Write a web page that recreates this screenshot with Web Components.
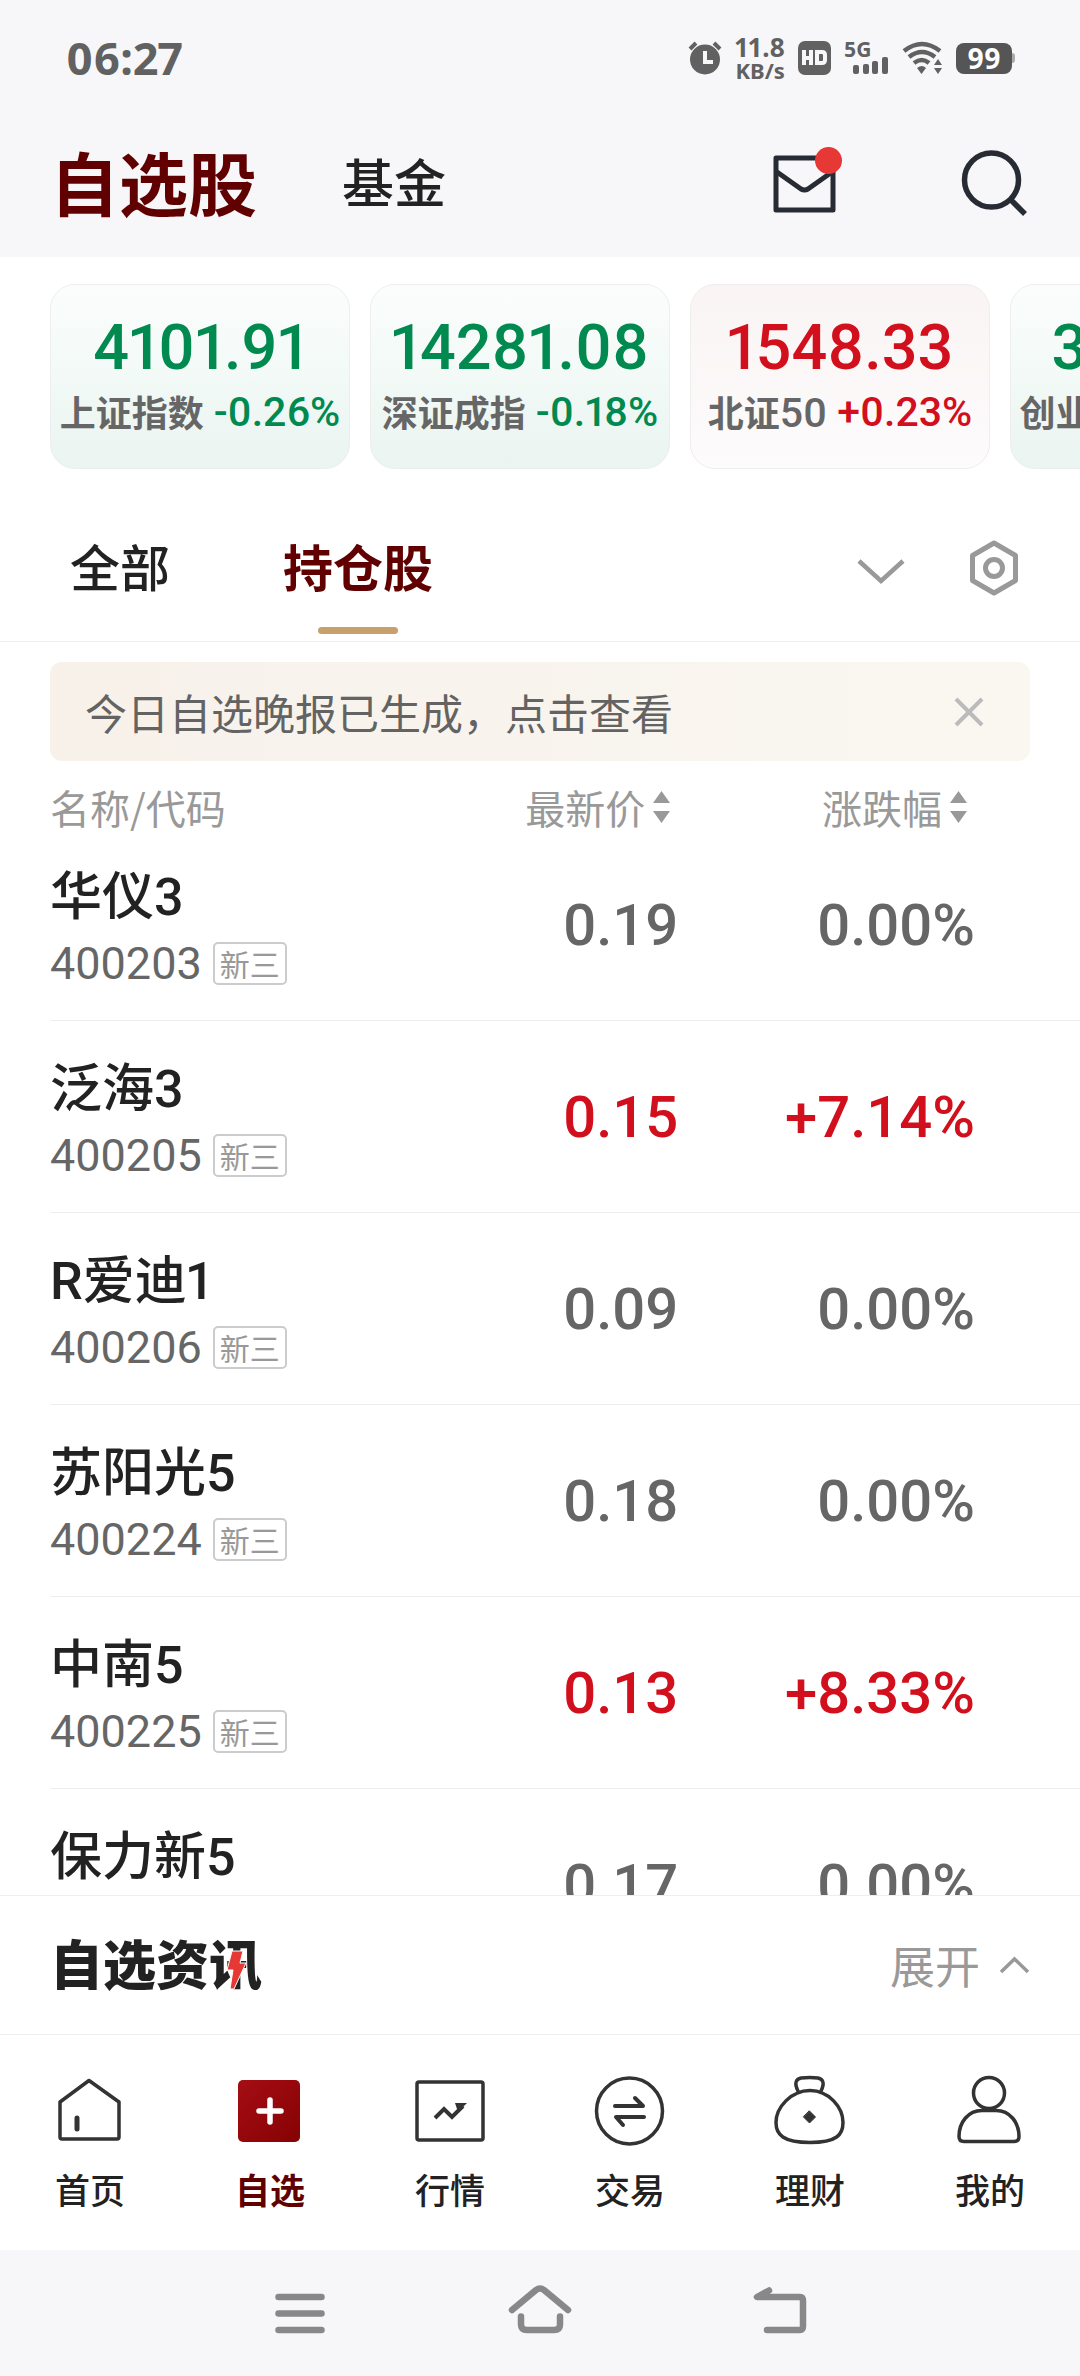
<!DOCTYPE html>
<html lang="zh-CN">
<head>
<meta charset="utf-8">
<meta name="viewport" content="width=device-width, initial-scale=1">
<title>自选股</title>
<style>
  :root {
    --num: Roboto, "Noto Sans CJK SC", sans-serif;
    --bold-num: "Noto Sans", "Noto Sans CJK SC", sans-serif;
    --cjk: "Noto Sans CJK SC", "Noto Sans", sans-serif;
    --brand: #600000;
    --ink: #222;
    --mid: #666;
    --soft: #999;
    --up: #d20f1c;
    --down: #008a50;
    --line: #eee;
    --bar: #f7f7f9;
  }
  html, body { margin: 0; height: 100%; }
  body { background: #fff; color: var(--ink); font: 400 40px/1 var(--cjk); font-variant-numeric: proportional-nums; }
</style>
</head>
<body>
<watch-app></watch-app>

<script>
const base = `
  *, *::before, *::after { box-sizing: border-box; }
  svg { display: block; flex: none; }
  button { appearance: none; border: 0; margin: 0; padding: 0; background: none; font: inherit; color: inherit; display: block; }
  a { color: inherit; text-decoration: none; }
`;

function define(name, css, html) {
  const template = document.createElement('template');
  template.innerHTML = `<style>${base}${css}</style>${html}`;
  customElements.define(name, class extends HTMLElement {
    constructor() {
      super();
      this.attachShadow({ mode: 'open' }).append(template.content.cloneNode(true));
    }
  });
}

define('status-bar', `
  :host { display: flex; align-items: center; justify-content: space-between; height: 116px; padding: 0 65px 0 66px; color: #616161; font-family: var(--bold-num); font-weight: 700; }
  time { font-size: 45px; line-height: 60px; }
  .icons { display: flex; align-items: center; gap: 13px; }
  .speed { display: flex; flex-direction: column; align-items: center; font-size: 26px; line-height: 24px; }
  .speed small { font-size: 22px; line-height: 22px; }
  .cell { display: flex; flex-direction: column; width: 45px; font-size: 21px; line-height: 15px; }
  .cell svg { align-self: flex-end; }
  .battery { display: flex; align-items: center; }
  .battery span { width: 56px; height: 31px; border-radius: 8px; background: #555; color: #fff; font-size: 28px; line-height: 31px; text-align: center; }
  .battery::after { content: ""; width: 3px; height: 10px; background: #aaa; border-radius: 0 3px 3px 0; }
`, `
  <time>06:27</time>
  <div class="icons">
    <svg width="34" height="34" viewBox="0 0 34 34"><circle cx="17" cy="18.500" r="15" fill="#616161"/><path d="M2 8l6-6M32 8l-6-6" stroke="#616161" stroke-width="4"/><path d="M17 10v11h8" fill="none" stroke="#f7f7f9" stroke-width="4"/></svg>
    <div class="speed"><span>11.8</span><small>KB/s</small></div>
    <svg width="33" height="34" viewBox="0 0 33 34"><rect width="33" height="34" rx="7" fill="#616161"/><path d="M6 9v15M13 9v15M6 17h7M19 11h5q3 0 3 3v5q0 3-3 3h-5z" fill="none" stroke="#f7f7f9" stroke-width="4"/></svg>
    <div class="cell"><span>5G</span><svg width="36" height="18" viewBox="0 0 36 18"><g fill="#616161"><rect x="0" y="8" width="6" height="9" rx="2"/><rect x="10" y="7" width="6" height="10" rx="2"/><rect x="19" y="4" width="6" height="13" rx="2"/><rect x="29" y="0" width="6" height="17" rx="2"/></g></svg></div>
    <svg width="41" height="34" viewBox="0 0 41 34"><g fill="none" stroke="#616161" stroke-width="4.500"><path d="M2 10q18-14 36 0"/><path d="M7 16q13-10 26 0"/><path d="M12 22q8-6 15 0"/></g><path d="M15 27q5-4 9 0l-4.500 6zM32 24l4-6 4 6zM32 27l4 6 4-6z" fill="#616161"/></svg>
    <div class="battery"><span>99</span></div>
  </div>
`);

define('app-header', `
  :host { display: flex; align-items: center; justify-content: space-between; height: 141px; padding: 0 50px 12px; }
  nav { display: flex; align-items: center; gap: 85px; }
  a { font-size: 52px; font-weight: 500; line-height: 76px; }
  a[aria-current] { font-size: 69px; font-weight: 700; color: var(--brand); }
  .tools { display: flex; align-items: center; gap: 117px; }
`, `
  <nav><a href="#stocks" aria-current="page">自选股</a><a href="#funds">基金</a></nav>
  <div class="tools">
    <button aria-label="消息"><svg width="70" height="70" viewBox="0 0 70 70"><g fill="none" stroke="#272b34" stroke-width="5" stroke-linejoin="round"><rect x="3" y="12" width="57" height="52"/><path d="M4 26l24 17q3.500 2 7 0l24-17"/></g><circle cx="55.500" cy="14.500" r="13.500" fill="#e63935"/></svg></button>
    <button aria-label="搜索"><svg width="70" height="70" viewBox="0 0 70 70"><g fill="none" stroke="#272b34" stroke-width="5.500"><circle cx="31.500" cy="34" r="27"/><path d="M50 53l15 15"/></g></svg></button>
  </div>
`);

define('index-card', `
  :host { flex: 0 0 300px; display: flex; flex-direction: column; align-items: center; height: 185px; padding-top: 30px; border: 1px solid var(--line); border-radius: 25px; color: var(--down); background: linear-gradient(#fbfdfc, #f3faf7 45%, #eaf4f0); box-sizing: border-box; white-space: nowrap; font-family: var(--num); font-weight: 500; }
  :host([up]) { color: var(--up); background: linear-gradient(#faf4f4, #fdfbfc); }
  .value { font-size: 63px; line-height: 66px; }
  .row { display: flex; align-items: center; gap: 10px; font-size: 41px; line-height: 60px; }
  .name { color: var(--mid); }
  ::slotted([slot=name]) { font: 700 36px/60px var(--cjk); }
`, `
  <div class="value"><slot></slot></div>
  <div class="row"><div class="name"><slot name="name"></slot><slot name="num"></slot></div><slot name="change"></slot></div>
`);

define('index-strip', `
  :host { display: flex; gap: 20px; padding: 27px 0 0 50px; overflow: hidden; background: #fff; }
`, `
  <index-card>4101.91<span slot="name">上证指数</span><span slot="change">-0.26%</span></index-card>
  <index-card>14281.08<span slot="name">深证成指</span><span slot="change">-0.18%</span></index-card>
  <index-card up>1548.33<span slot="name">北证</span><span slot="num">50</span><span slot="change">+0.23%</span></index-card>
  <index-card>3317.81<span slot="name">创业板指</span><span slot="change">-0.20%</span></index-card>
`);

define('watch-tabs', `
  :host { display: flex; align-items: stretch; justify-content: space-between; height: 173px; padding: 0 56px 0 70px; border-bottom: 1px solid var(--line); }
  .tabs { display: flex; gap: 113px; }
  .tabs button { display: flex; flex-direction: column; align-items: center; justify-content: flex-end; gap: 26px; padding-bottom: 7px; font-size: 50px; font-weight: 500; line-height: 72px; }
  .tabs button::after { content: ""; width: 80px; height: 7px; border-radius: 4px; }
  .tabs button[aria-selected=true] { color: var(--brand); font-weight: 700; }
  .tabs button[aria-selected=true]::after { background: #c8a06c; }
  .tools { display: flex; align-items: center; gap: 54px; padding-top: 26px; }
`, `
  <div class="tabs" role="tablist"><button role="tab">全部</button><button role="tab" aria-selected="true">持仓股</button></div>
  <div class="tools">
    <button aria-label="展开分组"><svg width="60" height="60" viewBox="0 0 60 60"><path d="M9 23l22 20 22-20" fill="none" stroke="#999" stroke-width="4.500"/></svg></button>
    <button aria-label="设置"><svg width="60" height="60" viewBox="0 0 60 60"><g fill="none" stroke="#999" stroke-width="5" stroke-linejoin="round"><path d="M30 5l21.500 12.500v25L30 55 8.500 42.500v-25z"/><circle cx="30" cy="30" r="8.500"/></g></svg></button>
  </div>
`);

define('notice-bar', `
  :host { display: flex; align-items: center; justify-content: space-between; height: 99px; margin: 20px 50px 0; padding: 0 46px 0 35px; border-radius: 12px; background: linear-gradient(90deg, #f7f1ea, #faf7f1); color: #636363; font-size: 42px; line-height: 60px; }
`, `
  <a href="#report"><slot></slot></a>
  <button aria-label="关闭"><svg width="30" height="30" viewBox="0 0 30 30"><path d="M2 2l26 26M28 2L2 28" stroke="#bbb" stroke-width="4"/></svg></button>
`);

define('stock-tag', `
  :host { display: block; padding: 0 5px; border: 2px solid #ccc; border-radius: 5px; color: var(--soft); font: 400 30px/39px var(--cjk); }
`, `<slot></slot>`);

const stocks = [
  ['华仪3', '400203', '0.19', '0.00%'],
  ['泛海3', '400205', '0.15', '+7.14%'],
  ['R爱迪1', '400206', '0.09', '0.00%'],
  ['苏阳光5', '400224', '0.18', '0.00%'],
  ['中南5', '400225', '0.13', '+8.33%'],
  ['保力新5', '400226', '0.17', '0.00%'],
];
const sorter = `<svg width="17" height="32" viewBox="0 0 17 32"><path d="M0 12L8.500 0 17 12zM0 20l8.500 12L17 20z" fill="#999"/></svg>`;

define('stock-table', `
  :host { display: block; flex: 1 1 0; min-height: 0; overflow: hidden; padding-left: 50px; }
  table { width: 100%; table-layout: fixed; border-collapse: separate; border-spacing: 0; }
  th, td { padding: 0; text-align: left; font-weight: 400; }
  thead th { height: 68px; padding-top: 26px; color: var(--soft); font-size: 40px; line-height: 40px; vertical-align: top; }
  thead button { display: flex; align-items: center; gap: 8px; margin-left: auto; }
  .name-col { width: 36%; }
  .price-col { width: 25%; }
  thead .price-col { padding-right: 8px; }
  thead .change-col { padding-right: 113px; }
  tbody th, tbody td { height: 192px; border-bottom: 1px solid var(--line); }
  tbody th { padding-top: 34px; vertical-align: top; }
  .name { display: block; font-family: var(--num); font-size: 52px; font-weight: 500; line-height: 70px; }
  .sub { display: flex; align-items: center; gap: 11px; padding-top: 8px; }
  .code { color: var(--mid); font: 400 45px/45px var(--num); }
  td { text-align: right; font: 500 58px/80px var(--num); color: var(--mid); }
  td.change-col { padding-right: 105px; }
  .up td { color: var(--up); }
`, `
  <table>
    <thead><tr><th class="name-col" scope="col">名称/代码</th><th class="price-col" scope="col"><button>最新价${sorter}</button></th><th class="change-col" scope="col"><button>涨跌幅${sorter}</button></th></tr></thead>
    <tbody>${stocks.map(([name, code, price, change]) => `<tr class="${change[0] === '+' ? 'up' : ''}"><th scope="row"><span class="name">${name}</span><div class="sub"><span class="code">${code}</span><stock-tag>新三</stock-tag></div></th><td>${price}</td><td class="change-col">${change}</td></tr>`).join('')}</tbody>
  </table>
`);

define('news-bar', `
  :host { display: flex; align-items: center; justify-content: space-between; height: 139px; padding: 0 50px; border-top: 1px solid var(--line); }
  h2 { position: relative; margin: 0; padding-bottom: 6px; font-size: 53px; font-weight: 900; line-height: 80px; }
  h2 svg { position: absolute; right: 15px; bottom: 17px; }
  button { display: flex; align-items: center; gap: 18px; color: var(--soft); font-size: 45px; line-height: 64px; }
`, `
  <h2><slot></slot><svg width="22" height="42" viewBox="0 0 22 42"><path d="M7 2h11l-3 12h6L9 40H5l3-19H2z" fill="#e63935" stroke="#fff" stroke-width="1"/></svg></h2>
  <button>展开<svg width="32" height="20" viewBox="0 0 32 20"><path d="M3 17L16.500 4 30 17" fill="none" stroke="#999" stroke-width="3.500"/></svg></button>
`);

define('tab-item', `
  :host { flex: 1; display: block; }
  a { display: flex; flex-direction: column; align-items: center; gap: 13px; font-size: 35px; font-weight: 500; line-height: 50px; }
  :host([active]) a { color: var(--brand); font-weight: 700; }
`, `<a href="#tab"><slot name="icon"></slot><slot></slot></a>`);

define('tab-bar', `
  :host { display: flex; height: 216px; padding-top: 36px; border-top: 1px solid var(--line); background: #fff; }
  svg { fill: none; stroke: #333; stroke-width: 3.500; stroke-linejoin: round; stroke-linecap: round; }
`, `
  <tab-item><svg slot="icon" width="80" height="80" viewBox="0 0 80 80"><path d="M10 31L39 9.500 69 31v35q0 2-2 2H12q-2 0-2-2z"/><path d="M27 47v11" stroke-width="5"/></svg>首页</tab-item>
  <tab-item active><svg slot="icon" width="80" height="80" viewBox="0 0 80 80"><defs><linearGradient id="red" x1="0" y1="0" x2="1" y2="1"><stop offset="0" stop-color="#a50d15"/><stop offset="1" stop-color="#850203"/></linearGradient></defs><rect x="8" y="9" width="62" height="62" rx="5" fill="url(#red)" stroke="none"/><path d="M29 40h22M40 29v22" stroke="#fff" stroke-width="5.500"/></svg>自选</tab-item>
  <tab-item><svg slot="icon" width="80" height="80" viewBox="0 0 80 80"><rect x="7" y="11" width="66" height="58" rx="2"/><path d="M25 47l9-9 8 8 11-11" stroke-width="4" stroke-linecap="butt" stroke-linejoin="miter"/><path d="M45 32h12l-9 9z" fill="#333" stroke="none"/></svg>行情</tab-item>
  <tab-item><svg slot="icon" width="80" height="80" viewBox="0 0 80 80"><circle cx="39.500" cy="40" r="33"/><path d="M25 35h28l-8-8M54 46H26l7 8" stroke-width="4"/></svg>交易</tab-item>
  <tab-item><svg slot="icon" width="80" height="80" viewBox="0 0 80 80"><path d="M40 19.500c-19 0-34 17-34 32 0 12 7 20 34 20s33-8 33-20c0-15-14-32-33-32z"/><path d="M28 20c-4-8-2-12 3-13q9-1 17 0c5 1 7 5 3 13"/><path d="M39.500 40l6 6-6 6-6-6z" fill="#333" stroke-width="1"/></svg>理财</tab-item>
  <tab-item><svg slot="icon" width="80" height="80" viewBox="0 0 80 80"><circle cx="39" cy="22" r="15.500"/><path d="M32 39.500h14c14 0 23 12 23 26q0 5-5 5H14q-5 0-5-5c0-14 9-26 23-26z"/></svg>我的</tab-item>
`);

define('system-nav', `
  :host { display: flex; justify-content: center; align-items: center; gap: 160px; height: 126px; background: var(--bar); }
  svg { fill: none; stroke: #888; stroke-width: 6.500; stroke-linecap: round; stroke-linejoin: round; }
`, `
  <button aria-label="最近任务"><svg width="80" height="80" viewBox="0 0 80 80"><path d="M18.500 24h43M18.500 40.500h43M18.500 57h43"/></svg></button>
  <button aria-label="主屏幕"><svg width="80" height="80" viewBox="0 0 80 80"><path d="M12 37l24-20q4-3 8 0l24 20M21 43.500v8q0 5.500 6 5.500h27q6 0 6-5.500v-8"/></svg></button>
  <button aria-label="返回"><svg width="80" height="80" viewBox="0 0 80 80"><path d="M29 17.500L17 24h43q3 0 3 4v25q0 4-3 4H27"/></svg></button>
`);

define('watch-app', `
  :host { display: flex; flex-direction: column; height: 100vh; overflow: hidden; }
  .top { background: var(--bar); }
`, `
  <div class="top"><status-bar></status-bar><app-header></app-header></div>
  <index-strip></index-strip>
  <watch-tabs></watch-tabs>
  <notice-bar>今日自选晚报已生成，点击查看</notice-bar>
  <stock-table></stock-table>
  <news-bar>自选资讯</news-bar>
  <tab-bar></tab-bar>
  <system-nav></system-nav>
`);
</script>
</body>
</html>
